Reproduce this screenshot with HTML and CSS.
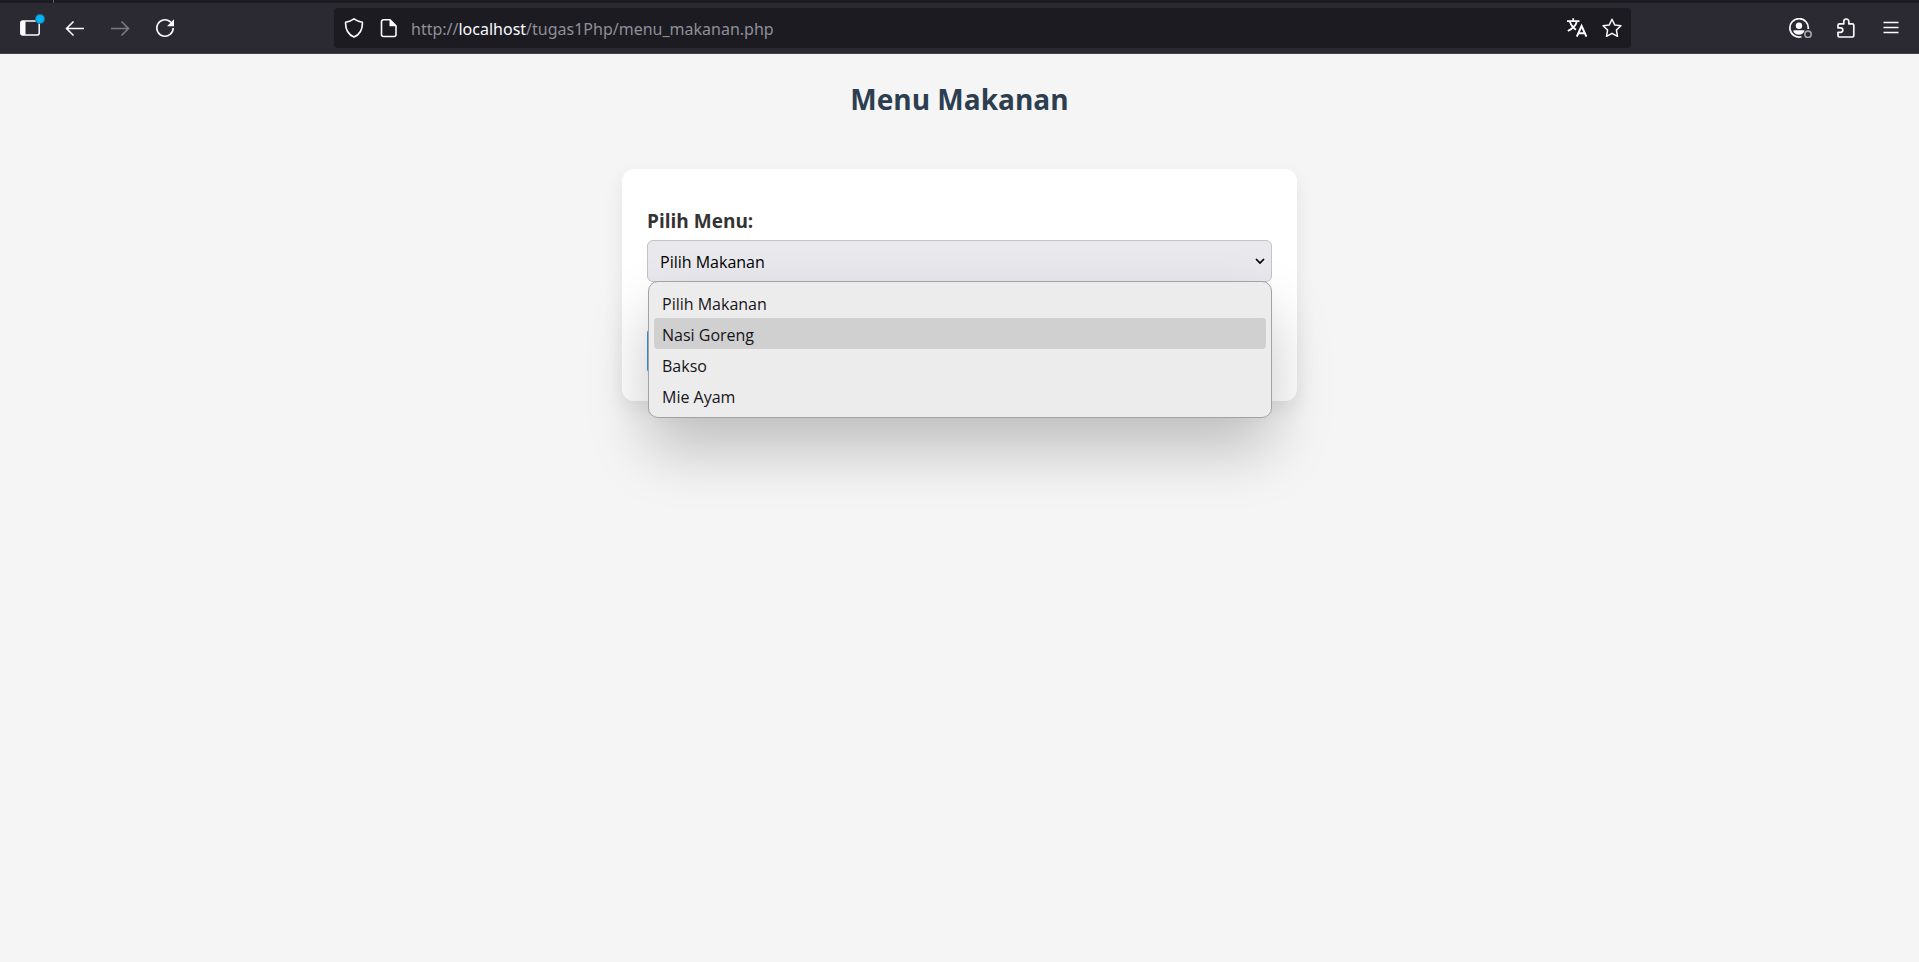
FILE: index.html
```html
<!DOCTYPE html>
<html lang="id">
<head>
<meta charset="utf-8">
<title>Menu Makanan</title>
<link rel="stylesheet" href="styles.css">
</head>
<body>
<header class="browser">
  <div class="tab-edge"></div>
  <nav class="toolbar" aria-label="Browser">
    <div class="tools">
      <button class="tool tool-sidebar" type="button" aria-label="Sidebar">
        <svg class="icon" viewBox="0 0 20 20"><rect x=".8" y="3" width="18.4" height="14" rx="2" fill="none" stroke="currentColor" stroke-width="1.5"/><path d="M1 3h4.5v14H1z" fill="currentColor"/></svg>
        <span class="badge"></span>
      </button>
      <button class="tool" type="button" aria-label="Back">
        <svg class="icon" viewBox="0 0 20 20"><path d="M19 10.5H2M8.5 3.5l-7 7 7 7" fill="none" stroke="currentColor" stroke-width="1.6"/></svg>
      </button>
      <button class="tool" type="button" aria-label="Forward" disabled>
        <svg class="icon" viewBox="0 0 20 20"><path d="M1 10.5h17M11.5 3.5l7 7-7 7" fill="none" stroke="currentColor" stroke-width="1.6"/></svg>
      </button>
      <button class="tool" type="button" aria-label="Reload">
        <svg class="icon" viewBox="0 0 20 20"><path d="M18.2 10A8.2 8.2 0 1 1 15 3.5l2 2" fill="none" stroke="currentColor" stroke-width="1.6"/><path d="M19 1.2v7h-7z" fill="currentColor"/></svg>
      </button>
    </div>
    <div class="urlbar">
      <button class="url-tool" type="button" aria-label="Protection"><svg class="icon" viewBox="0 0 20 20"><path d="M10 .9c2.3 1.7 5 2.7 8.4 3.3.3 6.3-1.9 12-8.4 14.9C3.5 16.2 1.3 10.5 1.6 4.2 5 3.6 7.7 2.6 10 .9z" fill="none" stroke="currentColor" stroke-width="1.6" stroke-linejoin="round"/></svg></button>
      <button class="url-tool" type="button" aria-label="Site information"><svg class="icon" viewBox="0 0 20 20"><path d="M4.5 1.8H11l6 6v8.7a2 2 0 0 1-2 2H4.5a2 2 0 0 1-2-2V3.8a2 2 0 0 1 2-2z" fill="none" stroke="currentColor" stroke-width="1.6"/><path d="M10.5 1.5v6.8h6.8z" fill="currentColor"/></svg></button>
      <p class="url">http://<b class="host">localhost</b>/tugas1Php/menu_makanan.php</p>
      <button class="url-tool" type="button" aria-label="Translate"><svg class="icon" viewBox="0 0 20 20"><path d="M0 3.2h12.5M6.2.3v2.9M9.9 3.2C9 7.5 5.5 10.7.8 13M2.8 3.2c1 3.8 3.2 6.5 6.2 8.5" fill="none" stroke="currentColor" stroke-width="1.8"/><path d="M9.8 18.7 14.6 8l4.8 10.7M11.3 15.3h6.6" fill="none" stroke="currentColor" stroke-width="2"/></svg></button>
      <button class="url-tool" type="button" aria-label="Bookmark"><svg class="icon" viewBox="0 0 20 20"><path d="m10 1.2 2.7 5.7 6.2.8-4.5 4.3 1.1 6.3-5.5-3-5.5 3 1.1-6.3-4.5-4.3 6.2-.8z" fill="none" stroke="currentColor" stroke-width="1.5" stroke-linejoin="round"/></svg></button>
    </div>
    <div class="tools">
      <button class="tool" type="button" aria-label="Account"><svg class="icon icon-wide" viewBox="0 0 24 20"><path d="M12.5 18.7A9.2 9.2 0 1 1 19.2 11" fill="none" stroke="currentColor" stroke-width="1.7"/><circle cx="10" cy="7.7" r="3.2" fill="currentColor"/><path d="M4.5 12.2h11l-.5 1.5c-1 2-2.5 3-5 3s-4.5-1-5.5-3z" fill="currentColor"/><circle cx="19" cy="16.3" r="3.2" fill="none" stroke="#a5a4aa" stroke-width="1.6"/></svg></button>
      <button class="tool" type="button" aria-label="Extensions"><svg class="icon" viewBox="0 0 20 20"><path d="M3.5 19h12.8a1.5 1.5 0 0 0 1.5-1.5V7.3a1.5 1.5 0 0 0-1.5-1.5h-3.5V3.5a2.5 2.5 0 0 0-5 0v2.3H3.5A1.5 1.5 0 0 0 2 7.3v2.5h2.5a2.3 2.3 0 0 1 0 4.6H2v3.1A1.5 1.5 0 0 0 3.5 19z" fill="none" stroke="currentColor" stroke-width="1.7" stroke-linejoin="round"/></svg></button>
      <button class="tool" type="button" aria-label="Menu"><svg class="icon" viewBox="0 0 20 20"><path d="M2.5 4.5h15M2.5 9.5h15M2.5 14.5h15" stroke="currentColor" stroke-width="1.5"/></svg></button>
    </div>
  </nav>
</header>
<main class="page">
  <h1 class="title">Menu Makanan</h1>
  <form class="card">
    <label class="label" for="menu">Pilih Menu:</label>
    <div class="field">
      <select class="select" id="menu">
        <option>Pilih Makanan</option>
        <option>Nasi Goreng</option>
        <option>Bakso</option>
        <option>Mie Ayam</option>
      </select>
      <svg class="chevron" viewBox="0 0 10 10"><path d="m1 3 4 4 4-4" fill="none" stroke="#000" stroke-width="1.7"/></svg>
      <ul class="options" role="listbox" aria-label="Pilih Menu">
        <li class="option" role="option">Pilih Makanan</li>
        <li class="option option-active" role="option" aria-selected="true">Nasi Goreng</li>
        <li class="option" role="option">Bakso</li>
        <li class="option" role="option">Mie Ayam</li>
      </ul>
    </div>
    <button class="submit" type="submit" aria-label="Kirim"></button>
  </form>
</main>
</body>
</html>
```
FILE: styles.css
```css
* {
  box-sizing: border-box;
}

body {
  margin: 0;
  min-height: 100vh;
  background: #f5f5f5;
  color: #333;
  font-family: "Open Sans", "Noto Sans", sans-serif;
}

.browser {
  background: #2b2a33;
  border-bottom: 1px solid #45434b;
}

.tab-edge {
  height: 3px;
  background: linear-gradient(#5b5b66, #5b5b66) 53px 0 / 1px 3px no-repeat #1c1b22;
}

.toolbar {
  display: flex;
  align-items: center;
  padding: 5px 6px 5px 7px;
}

.tools {
  display: flex;
}

.tool,
.url-tool {
  display: flex;
  align-items: center;
  justify-content: center;
  padding: 0;
  border: 0;
  background: none;
  color: #fbfbfe;
}

.tool {
  position: relative;
  width: 45px;
  height: 40px;
}

.tool:disabled {
  color: #7b7a81;
}

.url-tool {
  width: 35px;
  height: 40px;
}

.icon {
  width: 20px;
  height: 20px;
}

.icon-wide {
  width: 24px;
}

.badge {
  position: absolute;
  top: 7px;
  right: 8px;
  width: 8px;
  height: 8px;
  border-radius: 50%;
  background: #00b3f4;
  box-shadow: 0 0 0 1px #1f6f98;
}

.urlbar {
  flex: 1;
  display: flex;
  align-items: center;
  height: 40px;
  margin: 0 147px;
  padding: 0 2px;
  border-radius: 4px;
  background: #1c1b22;
}

.url {
  flex: 1;
  margin: 0 5px;
  padding-top: 2px;
  color: #8f8f97;
  font-family: "Noto Sans", "Open Sans", sans-serif;
  font-size: 16px;
  line-height: 24px;
}

.host {
  color: #fbfbfe;
  font-weight: 400;
}

.page {
  padding: 24px;
}

.title {
  margin: 0 0 48px;
  color: #2c3e50;
  font-size: 28px;
  line-height: 43px;
  text-align: center;
}

.card {
  max-width: 675px;
  margin: 0 auto;
  padding: 39px 25px 29px;
  border-radius: 12px;
  background: #fff;
  box-shadow: 0 8px 20px rgba(0, 0, 0, .08);
}

.label {
  display: block;
  margin-bottom: 5px;
  font-size: 19px;
  font-weight: 700;
  line-height: 27px;
}

.field {
  position: relative;
  margin-bottom: 48px;
}

.select {
  display: block;
  width: 100%;
  height: 42px;
  padding: 2px 12px 0;
  border: 1px solid #c4c4c8;
  border-radius: 6px;
  appearance: none;
  background: #e9e9ed;
  color: #000;
  font: 16px "Open Sans", "Noto Sans", sans-serif;
}

.chevron {
  position: absolute;
  top: 16px;
  right: 7px;
  width: 10px;
  height: 10px;
}

.options {
  position: absolute;
  top: 41px;
  left: 1px;
  right: 0;
  margin: 0;
  padding: 5px 5px 6px;
  border: 1px solid #a3a3a5;
  border-radius: 10px;
  background: #ececec;
  box-shadow: 0 32px 60px rgba(0, 0, 0, .22);
  list-style: none;
}

.option {
  padding: 3px 8px 0;
  border-radius: 4px;
  color: #15141a;
  font-size: 16px;
  line-height: 28px;
}

.option-active {
  background: #d0d0d0;
}

.submit {
  display: block;
  width: 100%;
  height: 42px;
  border: 0;
  border-radius: 3px;
  background: #3498db;
}
```
